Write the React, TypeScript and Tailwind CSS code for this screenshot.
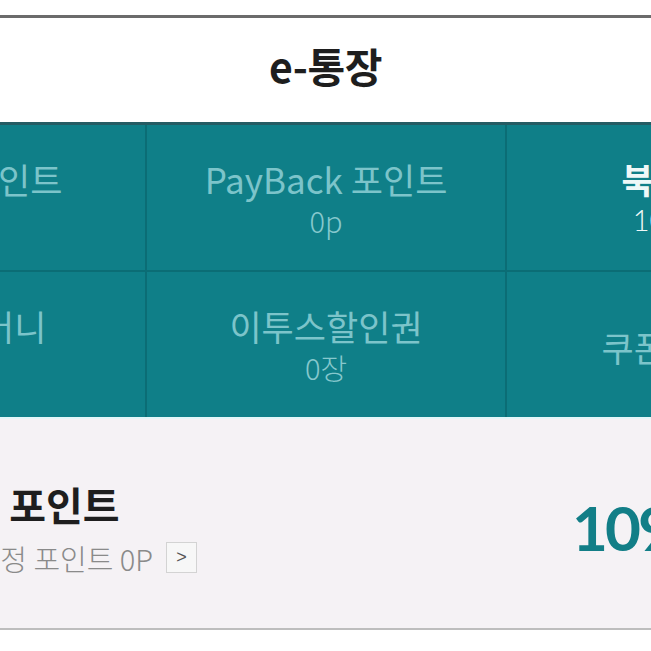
import React from "react";

const KR = { fontFamily: '"Noto Sans CJK KR", "Noto Sans", sans-serif' };

type Cell = { title: string; value?: string; active?: boolean };

const cells: Cell[] = [
  { title: "이투스 포인트", value: "0p" },
  { title: "PayBack 포인트", value: "0p" },
  { title: "북포인트", value: "10,900p", active: true },
  { title: "이투스 머니", value: "0원" },
  { title: "이투스할인권", value: "0장" },
  { title: "쿠폰 보관함" },
];

function GridCell({ c }: { c: Cell }) {
  return (
    <div className="bg-[#0f7f88] h-[145px] flex flex-col items-center justify-center pt-[4px]">
      <div
        className={
          c.active
            ? "text-[35px] leading-[40px] font-bold text-[#eef8f8]"
            : "text-[35px] leading-[40px] font-normal text-[#7cc4ca]"
        }
      >
        {c.title}
      </div>
      {c.value && (
        <div
          className={
            c.active
              ? "text-[29px] leading-[42px] font-light text-[#eef8f8] font-['Lato',sans-serif]"
              : "text-[29px] leading-[42px] font-light text-[#86c8cd]"
          }
        >
          {c.value}
        </div>
      )}
    </div>
  );
}

export default function App() {
  return (
    <div className="w-[651px] h-[651px] overflow-hidden bg-white" style={KR}>
      <div className="h-[15px] bg-white" />
      <div className="h-[3px] bg-[#6b6b6b]" />
      <div className="h-[104px] flex items-center justify-center pb-[10px]">
        <h1 className="text-[41px] leading-[48px] font-bold text-[#1e1e1e] tracking-[-0.5px]">
          e-통장
        </h1>
      </div>
      <div className="h-[3px] bg-[#255c64]" />
      <div className="ml-[-221px] w-[1086px] grid grid-cols-[366px_358px_358px] gap-[2px] bg-[#0b6d75]">
        {cells.map((c, i) => (
          <GridCell key={i} c={c} />
        ))}
      </div>
      <div className="h-[2px] bg-[#e3f7f9]" />
      <div className="h-[209px] bg-[#f5f2f5] ml-[-193px] w-[1078px] flex items-center">
        <div className="flex flex-col w-[765px] pt-[8px]">
          <div className="text-[40px] leading-[48px] font-bold text-[#1e1e1e]">
            사용 가능한 포인트
          </div>
          <div className="flex items-center mt-[12px] ml-[14px]">
            <span className="text-[29px] leading-[36px] font-light text-[#8a8a8a]">
              이번 달 소멸 예정 포인트 0P
            </span>
            <span className="ml-[13px] w-[31px] h-[31px] border border-[#d3d3d3] bg-[#f7f7f7] flex items-center justify-center text-[18px] text-[#555] font-['Liberation_Sans',sans-serif]">
              &gt;
            </span>
          </div>
        </div>
        <div className="text-[62px] leading-[70px] font-bold text-[#127e87] tracking-[-3px] font-['Lato',sans-serif] pt-[6px]">
          10900P
        </div>
      </div>
      <div className="h-[2px] bg-[#bdbdbd]" />
    </div>
  );
}
